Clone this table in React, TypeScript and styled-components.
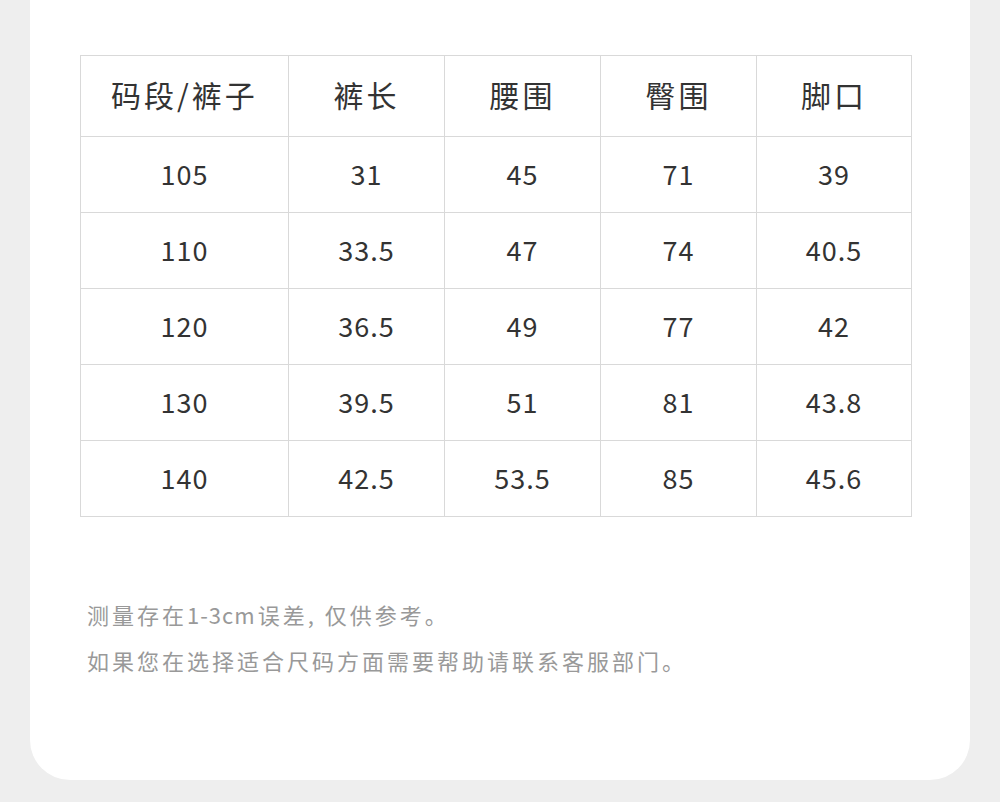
import React from 'react';
import styled, { createGlobalStyle } from 'styled-components';

const GlobalStyle = createGlobalStyle`
    html, body {
        margin: 0;
        padding: 0;
        background: #eeeeee;
    }
    body {
        font-family: "Noto Sans CJK SC", "Noto Sans", sans-serif;
    }
`;

const headers = ['码段/裤子', '裤长', '腰围', '臀围', '脚口'];
const colWidths = [208, 156, 156, 156, 155];

const rows = [
    ['105', '31', '45', '71', '39'],
    ['110', '33.5', '47', '74', '40.5'],
    ['120', '36.5', '49', '77', '42'],
    ['130', '39.5', '51', '81', '43.8'],
    ['140', '42.5', '53.5', '85', '45.6'],
];

const App: React.FC = () => {
    return (
        <>
            <GlobalStyle />
            <Page>
                <Card>
                    <SizeTable>
                        <colgroup>
                            {colWidths.map((w, i) => <Col key={i} $width={w} />)}
                        </colgroup>
                        <thead>
                            <tr>
                                {headers.map(h => <HeadCell key={h}>{h}</HeadCell>)}
                            </tr>
                        </thead>
                        <tbody>
                            {rows.map(r => (
                                <tr key={r[0]}>
                                    {r.map((v, i) => <Cell key={i}>{v}</Cell>)}
                                </tr>
                            ))}
                        </tbody>
                    </SizeTable>
                    <Notes>
                        <NoteLine>测量存在<Latin>1-3cm</Latin>误差, 仅供参考。</NoteLine>
                        <NoteLine>如果您在选择适合尺码方面需要帮助请联系客服部门。</NoteLine>
                    </Notes>
                </Card>
            </Page>
        </>
    );
};

const Page = styled.div`
    width: 1000px;
    height: 802px;
    padding: 0 30px;
    box-sizing: border-box;
    overflow: hidden;
`;

const Card = styled.div`
    background: #ffffff;
    height: 780px;
    border-radius: 0 0 40px 40px;
    padding: 55px 0 0 50px;
    box-sizing: border-box;
`;

const SizeTable = styled.table`
    border-collapse: collapse;
    table-layout: fixed;
    width: 832px;
    color: #333333;
    tr > * {
        border: 1px solid #d9d9d9;
        text-align: center;
        padding: 0;
        box-sizing: border-box;
    }
`;

const Col = styled.col<{ $width: number }>`
    width: ${p => p.$width}px;
`;

const HeadCell = styled.th`
    height: 81px;
    font-size: 30px;
    font-weight: 400;
    letter-spacing: 3px;
    padding-bottom: 4px !important;
`;

const Cell = styled.td`
    height: 76px;
    font-size: 27px;
    letter-spacing: 1px;
    padding-bottom: 2px !important;
`;

const Notes = styled.div`
    margin-top: 81px;
    padding-left: 7px;
    display: flex;
    flex-direction: column;
    gap: 14px;
`;

const NoteLine = styled.div`
    font-size: 22px;
    line-height: 32px;
    letter-spacing: 3px;
    color: #999999;
`;

const Latin = styled.span`
    letter-spacing: 1px;
    margin-right: 2px;
`;

export default App;
